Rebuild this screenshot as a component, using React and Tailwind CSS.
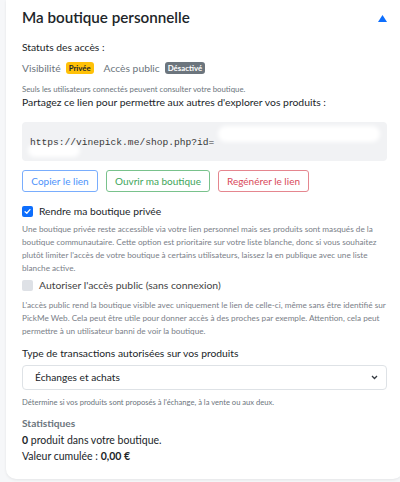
import React from 'react';

const font = { fontFamily: 'Lato, "Noto Sans", sans-serif' };

export default function App() {
  return (
    <div className="w-[400px] h-[482px] overflow-hidden bg-[#f6f7f9] pl-[6px]" style={font}>
      <div className="w-[397px] bg-white rounded-b-[10px] shadow-[0_1px_3px_rgba(0,0,0,0.08)] px-4 pt-[6px] pb-[15px] text-[#212529]">
        {/* ENCABEZADO */}
        <div className="flex items-center justify-between h-[24px]">
          <h2 className="text-[15.2px] font-semibold text-[#212529] leading-none">Ma boutique personnelle</h2>
          <svg width="9" height="7" viewBox="0 0 9 7">
            <polygon points="4.5,0 9,7 0,7" fill="#0d6efd" />
          </svg>
        </div>

        <p className="mt-[10px] text-[10.3px] leading-[14px]">Statuts des accès :</p>

        <div className="mt-[7px] flex items-center text-[10.3px] text-[#6c757d] leading-[14px]">
          <span>Visibilité</span>
          <span className="ml-[5px] bg-[#ffc107] text-[#212529] text-[7.8px] font-bold px-[3px] py-[1px] rounded-[3px] leading-[10px]">Privée</span>
          <span className="ml-[10px]">Accès public</span>
          <span className="ml-[5px] bg-[#6c757d] text-white text-[7.8px] font-bold px-[3px] py-[1px] rounded-[3px] leading-[10px]">Désactivé</span>
        </div>

        <p className="mt-[9px] text-[7.8px] text-[#6c757d] leading-[11px]">Seuls les utilisateurs connectés peuvent consulter votre boutique.</p>
        <p className="text-[10.4px] leading-[14px]">Partagez ce lien pour permettre aux autres d'explorer vos produits :</p>

        {/* LIEN (id masqué) */}
        <div className="mt-[13px] h-[39px] bg-[#f1f2f4] rounded-[4px] px-[8px] pt-[5px] relative">
          <span className="absolute left-[196px] top-[4px] w-[162px] h-[16px] bg-white rounded-full blur-[2px]"></span>
          <span className="absolute left-[6px] top-[22px] w-[52px] h-[13px] bg-white rounded-full blur-[2px]"></span>
          <span className="relative text-[9.6px] text-[#3a3a3a] leading-[14px]" style={{ fontFamily: '"Liberation Mono", monospace' }}>
            https://vinepick.me/shop.php?id=
          </span>
        </div>

        {/* BOTONES */}
        <div className="mt-[9px] flex gap-[8px] text-[10px]">
          <button className="h-[22px] w-[76px] border border-[#79adfd] text-[#4d93fb] rounded-[3px] bg-white">Copier le lien</button>
          <button className="h-[22px] w-[104px] border border-[#79c28c] text-[#3ea55a] rounded-[3px] bg-white">Ouvrir ma boutique</button>
          <button className="h-[22px] w-[91px] border border-[#e5868f] text-[#d9495a] rounded-[3px] bg-white">Regénérer le lien</button>
        </div>

        {/* CASILLA PRIVADA */}
        <label className="mt-[12px] flex items-center gap-[6px] text-[10.3px] leading-[14px]">
          <span className="w-[11px] h-[11px] rounded-[2px] bg-[#0d6efd] flex items-center justify-center">
            <svg width="7" height="7" viewBox="0 0 8 8">
              <path d="M1.2 4.2 L3.2 6 L6.8 1.8" stroke="white" strokeWidth="1.4" fill="none" strokeLinecap="round" strokeLinejoin="round" />
            </svg>
          </span>
          Rendre ma boutique privée
        </label>
        <p className="mt-[5px] text-[8.2px] leading-[13px] text-[#7a8088]">
          Une boutique privée reste accessible via votre lien personnel mais ses produits sont masqués de la boutique communautaire. Cette option est prioritaire sur votre liste blanche, donc si vous souhaitez plutôt limiter l'accès de votre boutique à certains utilisateurs, laissez la en publique avec une liste blanche active.
        </p>

        {/* CASILLA PUBLICA */}
        <label className="mt-[3px] flex items-center gap-[6px] text-[10.4px] leading-[14px] text-[#444]">
          <span className="w-[11px] h-[11px] rounded-[2px] bg-[#dee1e6]"></span>
          Autoriser l'accès public (sans connexion)
        </label>
        <p className="mt-[7px] text-[8.2px] leading-[13px] text-[#7a8088]">
          L'accès public rend la boutique visible avec uniquement le lien de celle-ci, même sans être identifié sur PickMe Web. Cela peut être utile pour donner accès à des proches par exemple. Attention, cela peut permettre à un utilisateur banni de voir la boutique.
        </p>

        {/* TRANSACCIONES */}
        <p className="mt-[8px] text-[10.3px] leading-[14px]">Type de transactions autorisées sur vos produits</p>
        <div className="mt-[5px] h-[25px] border border-[#dee2e6] rounded-[4px] flex items-center justify-between pl-[12px] pr-[8px] text-[10.2px]">
          <span>Échanges et achats</span>
          <svg width="7" height="5" viewBox="0 0 7 5">
            <path d="M1 1 L3.5 3.5 L6 1" stroke="#343a40" strokeWidth="1.3" fill="none" />
          </svg>
        </div>
        <p className="mt-[7px] text-[7.6px] leading-[11px] text-[#6c757d]">Détermine si vos produits sont proposés à l'échange, à la vente ou aux deux.</p>

        {/* ESTADISTICAS */}
        <p className="mt-[8px] text-[10.2px] leading-[14px] font-bold text-[#6c757d]">Statistiques</p>
        <p className="mt-[2px] text-[10.5px] leading-[16px]"><b>0</b> produit dans votre boutique.</p>
        <p className="text-[10.5px] leading-[16px]">Valeur cumulée : <b>0,00 €</b></p>
      </div>
    </div>
  );
}
